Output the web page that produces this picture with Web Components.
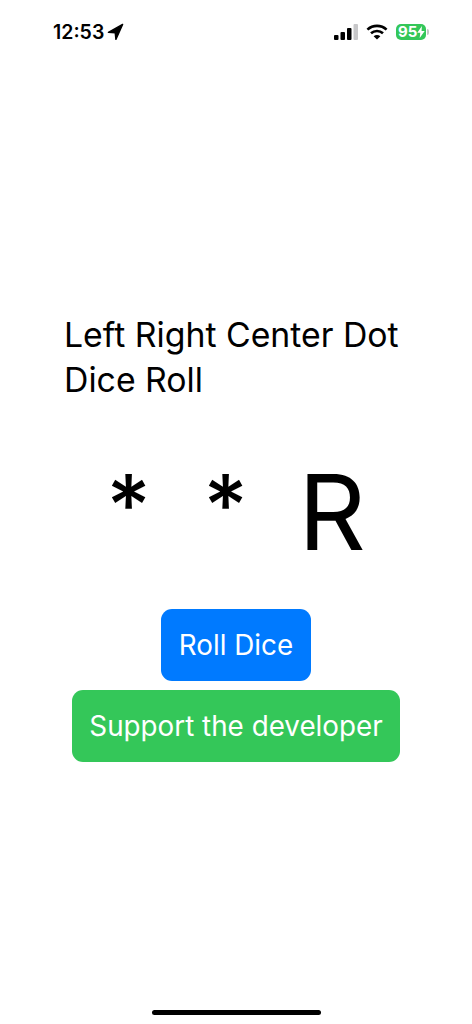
<!DOCTYPE html>
<html>
<head>
<meta charset="utf-8">
<style>
html, body { margin: 0; padding: 0; background: #fff; }
body { width: 472px; height: 1024px; font-family: Inter, "Liberation Sans", sans-serif; color: #000; }
</style>
</head>
<body>
<status-bar></status-bar>
<dice-app></dice-app>
<home-bar></home-bar>
<script>
class StatusBar extends HTMLElement {
    constructor(){
        super();
        this.shadow = this.attachShadow({mode: 'open'});
    }
    connectedCallback(){
        this.shadow.innerHTML = `
        <style>
        :host { display: flex; height: 64px; box-sizing: border-box; padding: 23px 43px 0 53px; justify-content: space-between; align-items: flex-start; }
        .left, .right { display: flex; align-items: center; height: 18px; }
        .time { font-size: 19.5px; font-weight: 600; line-height: 18px; }
        .left svg { margin-left: 3px; }
        .right svg { display: block; }
        .wifi { margin-left: 8px; }
        .batt { position: relative; width: 30px; height: 16px; margin-left: 8px; background: #34c759; border-radius: 5px; color: #fff; font-size: 15px; font-weight: 700; line-height: 16px; padding-left: 2px; box-sizing: border-box; }
        .cap { width: 2px; height: 6px; margin-left: 1px; background: #c4c4c6; border-radius: 0 2px 2px 0; }
        .bolt { position: absolute; right: 1px; top: 2px; }
        </style>
        <div class="left">
            <span class="time">12:53</span>
            <svg width="17" height="18" viewBox="0 0 17 18"><path d="M15.6 1.4 L1.4 9.4 L8.2 9.8 L8.9 16.4 Z" fill="#000" stroke="#000" stroke-width="1.4" stroke-linejoin="round"/></svg>
        </div>
        <div class="right">
            <svg width="24" height="16" viewBox="0 0 24 16">
                <rect x="0" y="11" width="4.5" height="5" rx="1" fill="#000"/>
                <rect x="6.5" y="8" width="4.5" height="8" rx="1" fill="#000"/>
                <rect x="13" y="4" width="4.5" height="12" rx="1" fill="#000"/>
                <rect x="19.5" y="0" width="4.5" height="16" rx="1" fill="#c7c7c9"/>
            </svg>
            <svg class="wifi" width="22" height="16" viewBox="0 0 22 16" fill="none" stroke="#000" stroke-width="2.6">
                <path d="M1.4 5.6 C6.8 .6 15.2 .6 20.6 5.6"/>
                <path d="M5 9.3 C8.4 6.2 13.6 6.2 17 9.3"/>
                <path d="M11 15.5 L7.6 12.2 C9.6 10.5 12.4 10.5 14.4 12.2 Z" fill="#000" stroke="none"/>
            </svg>
            <div class="batt">95<svg class="bolt" width="8" height="12" viewBox="0 0 8 13"><path d="M5 0 L0 7.4 H3.2 L2.6 13 L8 5.4 H4.6 Z" fill="#fff"/></svg></div>
            <div class="cap"></div>
        </div>
        `;
    }
}

class DiceFace extends HTMLElement {
    constructor(){
        super();
        this.attachShadow({mode: 'open'}).innerHTML = `
        <style>
        :host { display: block; text-align: center; font-size: var(--size, 105px); line-height: var(--lh, 130px); font-weight: var(--weight, 400); }
        </style>
        <slot></slot>
        `;
    }
}

class ActionButton extends HTMLElement {
    constructor(){
        super();
        this.attachShadow({mode: 'open'}).innerHTML = `
        <style>
        :host { display: block; height: 72px; padding: 0 var(--pad, 18px); box-sizing: border-box; background: var(--bg, #007aff); border-radius: 11px; color: #fff; font-size: 27.8px; line-height: 72px; cursor: pointer; }
        </style>
        <slot></slot>
        `;
    }
}

class DiceApp extends HTMLElement {
    constructor(){
        super();
        this.shadow = this.attachShadow({mode: 'open'});
    }
    connectedCallback(){
        this.shadow.innerHTML = `
        <style>
        :host { display: block; padding: 248px 64px 0; }
        h1 { margin: 0; font-size: 33.8px; font-weight: 400; line-height: 45px; }
        .dice { display: grid; grid-template-columns: 97px 97px 116px; justify-content: start; margin: 45px 0 0 16px; }
        .star { --size: 85px; --lh: 118px; --weight: 500; }
        .buttons { display: flex; flex-direction: column; align-items: center; gap: 9px; padding-top: 32px; }
        </style>
        <h1>Left Right Center Dot Dice Roll</h1>
        <div class="dice">
            <dice-face class="star">*</dice-face>
            <dice-face class="star">*</dice-face>
            <dice-face>R</dice-face>
        </div>
        <div class="buttons">
            <action-button>Roll Dice</action-button>
            <action-button style="--bg:#34c759;--pad:17.5px">Support the developer</action-button>
        </div>
        `;
    }
}

class HomeBar extends HTMLElement {
    constructor(){
        super();
        this.attachShadow({mode: 'open'}).innerHTML = `
        <style>
        :host { display: block; position: absolute; left: 152px; top: 1010px; width: 169px; height: 5px; background: #000; border-radius: 3px; }
        </style>
        `;
    }
}

customElements.define('status-bar', StatusBar);
customElements.define('dice-face', DiceFace);
customElements.define('action-button', ActionButton);
customElements.define('dice-app', DiceApp);
customElements.define('home-bar', HomeBar);
</script>
</body>
</html>
